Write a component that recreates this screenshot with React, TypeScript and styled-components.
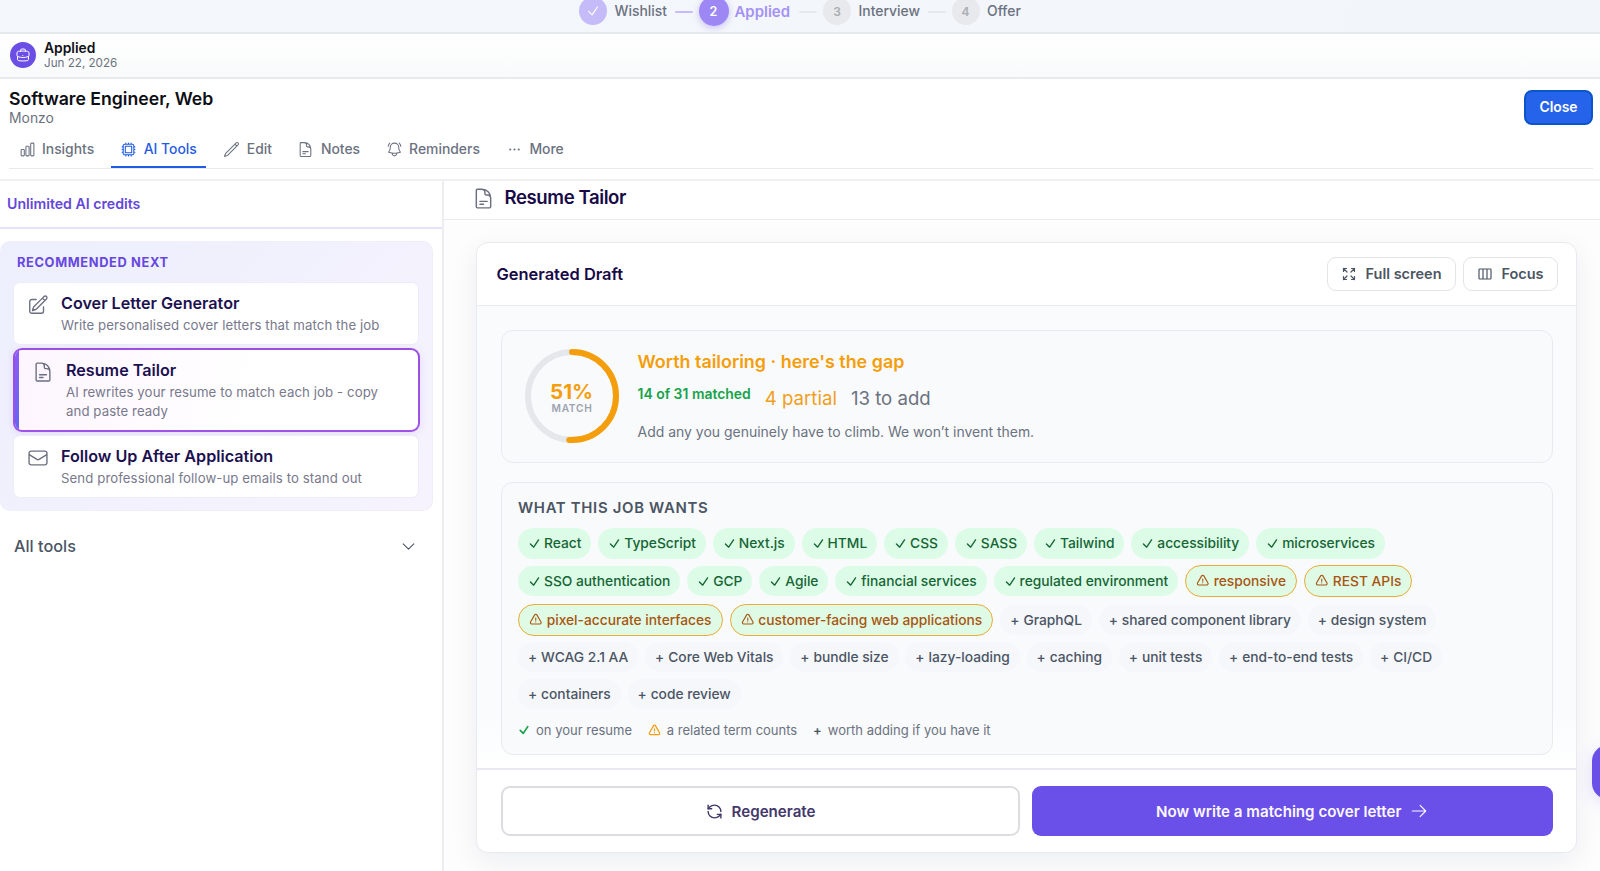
import React from 'react';
import styled, { createGlobalStyle, css } from 'styled-components';
import {
  HiOutlineArrowRight,
  HiOutlineArrowsPointingOut,
  HiOutlineBellAlert,
  HiOutlineBriefcase,
  HiOutlineChartBar,
  HiOutlineCheck,
  HiOutlineChevronDown,
  HiOutlineCpuChip,
  HiOutlineDocumentText,
  HiOutlineEllipsisHorizontal,
  HiOutlineEnvelope,
  HiOutlineExclamationTriangle,
  HiOutlinePencil,
  HiOutlinePencilSquare,
  HiOutlineViewColumns,
} from 'react-icons/hi2';
import { RefreshCcw } from 'lucide-react';

const GlobalStyle = createGlobalStyle`
  *, *::before, *::after { box-sizing: border-box; }
  body {
    margin: 0;
    overflow: hidden;
    background: #fff;
    color: #111827;
    font-family: Inter, "Liberation Sans", sans-serif;
  }
  button { font-family: inherit; margin: 0; }
  svg { display: block; flex: none; }
`;

const Page = styled.div`
  position: relative;
  display: flex;
  flex-direction: column;
  height: 871px;
  overflow: hidden;
`;

/* ---------- Stage stepper ---------- */

const Stepper = styled.div`
  height: 34px;
  padding-left: 579px;
  display: flex;
  align-items: center;
  padding-bottom: 10px;
  border-bottom: 2px solid #e6e9ec;
  background: linear-gradient(100deg, #f4f7fb, #f2f5f9);
  overflow: hidden;
`;

type StepState = 'done' | 'current' | 'todo';

const StepDot = styled.span<{ $state: StepState }>`
  flex: none;
  display: flex;
  align-items: center;
  justify-content: center;
  width: ${p => (p.$state === 'current' ? 30 : 28)}px;
  height: ${p => (p.$state === 'current' ? 30 : 28)}px;
  border-radius: 50%;
  font-size: ${p => (p.$state === 'current' ? 12.5 : 12)}px;
  font-weight: 600;
  ${p => p.$state === 'done' && css`background: #c5bbf8; color: #fff;`}
  ${p => p.$state === 'current' && css`
    background: #9d87f4;
    color: #fff;
    box-shadow: 0 2px 6px rgba(124, 92, 240, 0.35);
  `}
  ${p => p.$state === 'todo' && css`background: #e7e9ec; color: #a9adb3;`}
`;

const StepLabel = styled.span<{ $current?: boolean; $width: number }>`
  width: ${p => p.$width}px;
  margin: ${p => (p.$current ? '1px 0 0 6px' : '0 0 0 7.5px')};
  white-space: nowrap;
  font-size: ${p => (p.$current ? 14.95 : 13.9)}px;
  font-weight: ${p => (p.$current ? 600 : 500)};
  color: ${p => (p.$current ? '#a491f5' : '#6b7280')};
`;

const StepLine = styled.span<{ $active?: boolean; $width: number }>`
  width: ${p => p.$width}px;
  height: 2px;
  margin: 1px 6px 0 7px;
  border-radius: 1px;
  background: ${p => (p.$active ? '#c5bbf8' : '#e6e9ed')};
`;

/* ---------- Status row ---------- */

const StatusRow = styled.div`
  height: 45px;
  padding: 0 0 1px 10px;
  display: flex;
  align-items: center;
  gap: 8px;
  background: linear-gradient(#fff, #f9fafb);
  border-bottom: 2px solid #e8eaed;
`;

const StatusBadge = styled.span`
  width: 26px;
  height: 26px;
  border-radius: 50%;
  display: flex;
  align-items: center;
  justify-content: center;
  background: #6a4ee6;
  color: #fff;
`;

const StatusTitle = styled.div`
  font-size: 13.85px;
  font-weight: 600;
  line-height: 16px;
  color: #0f1117;
`;

const StatusDate = styled.div`
  font-size: 11.65px;
  line-height: 15px;
  color: #6b7280;
`;

/* ---------- Job header ---------- */

const JobHeader = styled.header`
  height: 101.5px;
  padding: 9px 7px 0 9px;
  border-bottom: 2px solid #eef0f2;
`;

const JobTop = styled.div`
  display: flex;
  justify-content: space-between;
  align-items: flex-start;
  height: 43px;
`;

const JobTitle = styled.h1`
  margin: 0;
  font-size: 17.65px;
  font-weight: 600;
  line-height: 22px;
  color: #0d0f14;
`;

const Company = styled.div`
  font-size: 13.9px;
  line-height: 17px;
  color: #6b7280;
`;

const CloseButton = styled.button`
  width: 69px;
  height: 35px;
  margin-top: 2px;
  border: 2px solid #0b55cb;
  border-radius: 8px;
  background: #2563eb;
  color: #fff;
  font-size: 13.9px;
  font-weight: 600;
  padding: 0 0 1px;
`;

const Tabs = styled.nav`
  display: flex;
  gap: 7px;
  height: 38px;
  border-bottom: 1.5px solid #e8eaed;
`;

const Tab = styled.a<{ $active?: boolean; $pad?: string; $gap?: number }>`
  display: flex;
  align-items: center;
  gap: ${p => p.$gap ?? 6}px;
  height: 37px;
  padding: ${p => p.$pad ?? '1.5px 9.5px 0 10px'};
  font-size: 13.9px;
  font-weight: 500;
  color: ${p => (p.$active ? '#1f5be3' : '#6b7280')};
  border-bottom: 2px solid ${p => (p.$active ? '#1f5be3' : 'transparent')};
`;

/* ---------- Body ---------- */

const Body = styled.div`
  flex: 1;
  display: flex;
  min-height: 0;
`;

const Sidebar = styled.aside`
  width: 444px;
  flex: none;
  border-right: 2px solid #edeef1;
`;

const Credits = styled.div`
  height: 48px;
  padding: 0 0 1px 7px;
  display: flex;
  align-items: center;
  border-bottom: 2px solid #e6e1fb;
  font-size: 14.15px;
  font-weight: 600;
  color: #6347d9;
`;

const Recommended = styled.section`
  width: 433px;
  height: 270px;
  margin-top: 12.5px;
  padding: 13px 13.5px 0 13px;
  border-radius: 10px;
  border: 1px solid #f0eefb;
  border-left: 0;
  background: linear-gradient(135deg, #edeffd, #f6f3fd);
  display: flex;
  flex-direction: column;
`;

const RecommendedTitle = styled.h2`
  margin: 0 0 12px 4px;
  font-size: 12.8px;
  line-height: 15px;
  font-weight: 700;
  letter-spacing: 0.66px;
  color: #6648e0;
`;

const ToolCard = styled.div<{ $selected?: boolean }>`
  display: flex;
  align-items: flex-start;
  gap: 12px;
  height: 63px;
  padding: 9px 13px 0;
  border: 1px solid #eeebfa;
  border-radius: 7px;
  background: #fff;
  color: #6b6f80;
  > svg { margin-top: 2px; }
  ${p => p.$selected && css`
    height: 84px;
    margin: 3px -1px 2.5px 0;
    padding: 9px 13px 0 17px;
    > svg { margin-top: 2px; }
    border: 2px solid transparent;
    border-radius: 9px;
    background:
      linear-gradient(#8b5cf6, #6366f1) left / 4px 100% no-repeat padding-box,
      linear-gradient(100deg, #fdf5fe, #fff 60%) padding-box,
      linear-gradient(#9a4fe0, #9f52e6) border-box;
    box-shadow: 0 2px 8px rgba(139, 92, 246, 0.14);
  `}
`;

const ToolText = styled.div``;

const ToolName = styled.div`
  font-size: 16.15px;
  font-weight: 600;
  line-height: 22px;
  color: #1c1150;
`;

const ToolNote = styled.div`
  margin-top: 2px;
  font-size: 13.22px;
  letter-spacing: 0.08px;
  line-height: 19.3px;
  color: #78798c;
`;

const AllTools = styled.div`
  display: flex;
  align-items: center;
  justify-content: space-between;
  height: 28px;
  margin-top: 21px;
  padding: 0 25px 0 14px;
  font-size: 16.25px;
  font-weight: 500;
  color: #4b5563;
`;

/* ---------- Main panel ---------- */

const Main = styled.main`
  flex: 1;
  min-width: 0;
  display: flex;
  flex-direction: column;
  background: #fdfdfe;
`;

const ToolHeader = styled.div`
  flex: none;
  height: 39.5px;
  padding: 0 0 2px 28px;
  display: flex;
  align-items: center;
  gap: 9.5px;
  border-bottom: 1.5px solid #e8eaed;
  background: #fff;
  color: #6b6f80;
`;

const ToolHeading = styled.h2`
  margin: 0 0 4px;
  font-size: 18.6px;
  font-weight: 600;
  letter-spacing: -0.42px;
  color: #170a47;
`;

const Draft = styled.section`
  flex: none;
  display: flex;
  flex-direction: column;
  width: 1101px;
  height: 611px;
  margin: 22px 0 0 32px;
  border: 1.5px solid #e8eaed;
  border-radius: 12px;
  background: #fff;
  box-shadow: 0 8px 28px rgba(17, 24, 39, 0.07);
  overflow: hidden;
`;

const DraftHeader = styled.div`
  height: 63px;
  flex: none;
  display: flex;
  align-items: center;
  gap: 7px;
  padding: 0 18.5px 0 19.5px;
  border-bottom: 1.5px solid #e8eaed;
`;

const DraftTitle = styled.h3`
  margin: 0 auto 0 0;
  font-size: 16.45px;
  font-weight: 600;
  color: #170a47;
`;

const GhostButton = styled.button<{ $width: number }>`
  width: ${p => p.$width}px;
  height: 34px;
  display: flex;
  align-items: center;
  justify-content: center;
  gap: 8px;
  padding: 0 0 1px 1px;
  border: 1.5px solid #e2e4e8;
  border-radius: 9px;
  background: #fff;
  color: #4b5563;
  font-size: 14.5px;
  font-weight: 600;
`;

const DraftBody = styled.div`
  flex: 1;
  padding: 23.5px 23.5px 0 24px;
  background: linear-gradient(#f9fbfd 88%, #fff 100%);
`;

const panel = css`
  border: 1.5px solid #e8eaed;
  border-radius: 12px;
  background: #f9fafc;
`;

const MatchPanel = styled.div`
  ${panel}
  height: 133.5px;
  display: flex;
  gap: 19px;
  padding: 18.5px 22.5px;
`;

const Ring = styled.div`
  position: relative;
  width: 94px;
  height: 94px;
  display: flex;
  flex-direction: column;
  align-items: center;
  justify-content: center;
`;

const RingArt = styled.svg`
  position: absolute;
  inset: 0;
`;

const RingValue = styled.span`
  margin-top: 4px;
  font-size: 20.7px;
  line-height: 20px;
  font-weight: 700;
  letter-spacing: -0.1px;
  color: #f59e0b;
`;

const RingLabel = styled.span`
  margin-left: 1px;
  font-size: 10.2px;
  line-height: 12px;
  font-weight: 600;
  letter-spacing: 0.7px;
  color: #9ca3af;
`;

const MatchText = styled.div`
  display: flex;
  flex-direction: column;
`;

const MatchTitle = styled.div`
  font-size: 17.9px;
  line-height: 25px;
  font-weight: 600;
  color: #f59e0b;
`;

const MatchCounts = styled.div`
  display: flex;
  align-items: flex-start;
  gap: 14px;
  height: 39.5px;
  margin-top: 7.5px;
  font-size: 18.6px;
  line-height: 32px;
  color: #6b7280;
`;

const Matched = styled.span`
  font-size: 13.95px;
  line-height: 24px;
  font-weight: 600;
  color: #16a34a;
`;

const Partial = styled.span`
  color: #f0a01c;
`;

const MatchNote = styled.div`
  font-size: 13.97px;
  line-height: 22px;
  color: #6b7280;
`;

const WantsPanel = styled.div`
  ${panel}
  height: 273px;
  margin-top: 18.5px;
  padding: 15px 16px 0;
`;

const WantsTitle = styled.h4`
  margin: 0;
  font-size: 14.9px;
  line-height: 20px;
  font-weight: 600;
  letter-spacing: 0.68px;
  color: #4b5563;
`;

const ChipRows = styled.div`
  display: flex;
  flex-direction: column;
  gap: 6.5px;
  margin-top: 10.5px;
`;

const ChipRow = styled.div`
  display: flex;
  align-items: center;
  gap: 6.9px;
`;

type ChipKind = 'match' | 'partial' | 'missing';

const ChipBox = styled.span<{ $kind: ChipKind }>`
  display: flex;
  align-items: center;
  gap: 3px;
  height: 30.5px;
  padding: 0 10px;
  border-radius: 16px;
  font-size: 13.77px;
  font-weight: 500;
  white-space: nowrap;
  ${p => p.$kind === 'match' && css`background: #dcfce7; color: #166534;`}
  ${p => p.$kind === 'partial' && css`
    height: 32px;
    gap: 4px;
    padding: 0 10.2px;
    border: 1.5px solid #ebab35;
    background: #dffbe6;
    color: #a85510;
  `}
  ${p => p.$kind === 'missing' && css`
    height: 30px;
    gap: 4px;
    padding: 0 9.9px;
    background: #f5f7fb;
    color: #4b5563;
  `}
`;

const Legend = styled.div`
  display: flex;
  align-items: center;
  height: 20px;
  margin-top: 11.5px;
  font-size: 13px;
  color: #6b7280;
`;

const LegendItem = styled.span<{ $tone: string }>`
  display: flex;
  align-items: center;
  gap: 6px;
  margin-right: 15.8px;
  svg { color: ${p => p.$tone}; }
`;

const Plus = styled.span<{ $bold?: boolean }>`
  font-weight: ${p => (p.$bold ? 600 : 500)};
  color: #4b5563;
`;

const DraftFooter = styled.div`
  height: 84px;
  flex: none;
  display: flex;
  gap: 12px;
  padding: 16px 23.5px 0 24px;
  border-top: 2px solid #e7e8f3;
`;

const ActionButton = styled.button<{ $primary?: boolean }>`
  flex: 0 0 ${p => (p.$primary ? 520.5 : 519)}px;
  height: 50px;
  display: flex;
  align-items: center;
  justify-content: center;
  gap: 9px;
  border-radius: 9px;
  font-size: 15.13px;
  font-weight: 600;
  padding: 0;
  border: ${p => (p.$primary ? '0' : '2px solid #dcdde1')};
  background: ${p => (p.$primary ? '#6b4fe9' : '#fff')};
  color: ${p => (p.$primary ? '#fbf9ff' : '#43386b')};
`;

const HelpTab = styled.div`
  position: absolute;
  left: 1592px;
  top: 745px;
  width: 54px;
  height: 54px;
  border-radius: 16px;
  background: #6b4fe9;
  box-shadow: 0 4px 16px rgba(107, 79, 233, 0.18);
`;

const icons: Record<ChipKind, React.ReactNode> = {
  match: <HiOutlineCheck size={13} strokeWidth={2.5} />,
  partial: <HiOutlineExclamationTriangle size={13.5} strokeWidth={2} />,
  missing: <Plus>+</Plus>,
};

const rows: [ChipKind, string][][] = [
  [
    ['match', 'React'], ['match', 'TypeScript'], ['match', 'Next.js'], ['match', 'HTML'], ['match', 'CSS'],
    ['match', 'SASS'], ['match', 'Tailwind'], ['match', 'accessibility'], ['match', 'microservices'],
  ],
  [
    ['match', 'SSO authentication'], ['match', 'GCP'], ['match', 'Agile'], ['match', 'financial services'],
    ['match', 'regulated environment'], ['partial', 'responsive'], ['partial', 'REST APIs'],
  ],
  [
    ['partial', 'pixel-accurate interfaces'], ['partial', 'customer-facing web applications'],
    ['missing', 'GraphQL'], ['missing', 'shared component library'], ['missing', 'design system'],
  ],
  [
    ['missing', 'WCAG 2.1 AA'], ['missing', 'Core Web Vitals'], ['missing', 'bundle size'], ['missing', 'lazy-loading'],
    ['missing', 'caching'], ['missing', 'unit tests'], ['missing', 'end-to-end tests'], ['missing', 'CI/CD'],
  ],
  [['missing', 'containers'], ['missing', 'code review']],
];

export default function App() {
  return (
    <Page>
      <GlobalStyle />
      <Stepper>
        <StepDot $state="done"><HiOutlineCheck size={14} strokeWidth={2} /></StepDot>
        <StepLabel $width={53}>Wishlist</StepLabel>
        <StepLine $active $width={18} />
        <StepDot $state="current">2</StepDot>
        <StepLabel $current $width={57.5}>Applied</StepLabel>
        <StepLine $width={18} />
        <StepDot $state="todo">3</StepDot>
        <StepLabel $width={62}>Interview</StepLabel>
        <StepLine $width={18} />
        <StepDot $state="todo">4</StepDot>
        <StepLabel $width={34}>Offer</StepLabel>
      </Stepper>

      <StatusRow>
        <StatusBadge><HiOutlineBriefcase size={16} /></StatusBadge>
        <div>
          <StatusTitle>Applied</StatusTitle>
          <StatusDate>Jun 22, 2026</StatusDate>
        </div>
      </StatusRow>

      <JobHeader>
        <JobTop>
          <div>
            <JobTitle>Software Engineer, Web</JobTitle>
            <Company>Monzo</Company>
          </div>
          <CloseButton>Close</CloseButton>
        </JobTop>
        <Tabs>
          <Tab><HiOutlineChartBar size={17} />Insights</Tab>
          <Tab $active $pad="1.5px 9.5px 0 9.5px" $gap={6.5}><HiOutlineCpuChip size={17} />AI Tools</Tab>
          <Tab $pad="1.5px 8.5px 0 9.5px" $gap={7}><HiOutlinePencil size={17} />Edit</Tab>
          <Tab $pad="1.5px 9px 0 9.5px" $gap={7}><HiOutlineDocumentText size={17} />Notes</Tab>
          <Tab><HiOutlineBellAlert size={17} />Reminders</Tab>
          <Tab><HiOutlineEllipsisHorizontal size={17} />More</Tab>
        </Tabs>
      </JobHeader>

      <Body>
        <Sidebar>
          <Credits>Unlimited AI credits</Credits>
          <Recommended>
            <RecommendedTitle>RECOMMENDED NEXT</RecommendedTitle>
            <ToolCard>
              <HiOutlinePencilSquare size={22} />
              <ToolText>
                <ToolName>Cover Letter Generator</ToolName>
                <ToolNote>Write personalised cover letters that match the job</ToolNote>
              </ToolText>
            </ToolCard>
            <ToolCard $selected>
              <HiOutlineDocumentText size={22} />
              <ToolText>
                <ToolName>Resume Tailor</ToolName>
                <ToolNote>AI rewrites your resume to match each job - copy and paste ready</ToolNote>
              </ToolText>
            </ToolCard>
            <ToolCard>
              <HiOutlineEnvelope size={22} />
              <ToolText>
                <ToolName>Follow Up After Application</ToolName>
                <ToolNote>Send professional follow-up emails to stand out</ToolNote>
              </ToolText>
            </ToolCard>
          </Recommended>
          <AllTools>
            All tools
            <HiOutlineChevronDown size={17} />
          </AllTools>
        </Sidebar>

        <Main>
          <ToolHeader>
            <HiOutlineDocumentText size={23} />
            <ToolHeading>Resume Tailor</ToolHeading>
          </ToolHeader>
          <Draft>
            <DraftHeader>
              <DraftTitle>Generated Draft</DraftTitle>
              <GhostButton $width={129}><HiOutlineArrowsPointingOut size={16} strokeWidth={1.8} />Full screen</GhostButton>
              <GhostButton $width={95}><HiOutlineViewColumns size={16} strokeWidth={1.8} />Focus</GhostButton>
            </DraftHeader>
            <DraftBody>
              <MatchPanel>
                <Ring>
                  <RingArt width="94" height="94" viewBox="0 0 94 94" fill="none" strokeWidth="6">
                    <circle cx="47" cy="47" r="44" stroke="#e5e8eb" />
                    <circle
                      cx="47" cy="47" r="44" stroke="#f59e0b" strokeLinecap="round"
                      pathLength="100" strokeDasharray="51 49" transform="rotate(-90 47 47)"
                    />
                  </RingArt>
                  <RingValue>51%</RingValue>
                  <RingLabel>MATCH</RingLabel>
                </Ring>
                <MatchText>
                  <MatchTitle>Worth tailoring · here's the gap</MatchTitle>
                  <MatchCounts>
                    <Matched>14 of 31 matched</Matched>
                    <Partial>4 partial</Partial>
                    <span>13 to add</span>
                  </MatchCounts>
                  <MatchNote>Add any you genuinely have to climb. We won’t invent them.</MatchNote>
                </MatchText>
              </MatchPanel>
              <WantsPanel>
                <WantsTitle>WHAT THIS JOB WANTS</WantsTitle>
                <ChipRows>
                  {rows.map((row, i) => (
                    <ChipRow key={i}>
                      {row.map(([kind, label]) => (
                        <ChipBox key={label} $kind={kind}>{icons[kind]}{label}</ChipBox>
                      ))}
                    </ChipRow>
                  ))}
                </ChipRows>
                <Legend>
                  <LegendItem $tone="#16a34a"><HiOutlineCheck size={12} strokeWidth={3.5} />on your resume</LegendItem>
                  <LegendItem $tone="#f59e0b"><HiOutlineExclamationTriangle size={13} strokeWidth={2.3} />a related term counts</LegendItem>
                  <LegendItem $tone="#4b5563"><Plus $bold>+</Plus>worth adding if you have it</LegendItem>
                </Legend>
              </WantsPanel>
            </DraftBody>
            <DraftFooter>
              <ActionButton><RefreshCcw size={17} strokeWidth={2} />Regenerate</ActionButton>
              <ActionButton $primary>Now write a matching cover letter<HiOutlineArrowRight size={18} /></ActionButton>
            </DraftFooter>
          </Draft>
        </Main>
      </Body>
      <HelpTab />
    </Page>
  );
}
